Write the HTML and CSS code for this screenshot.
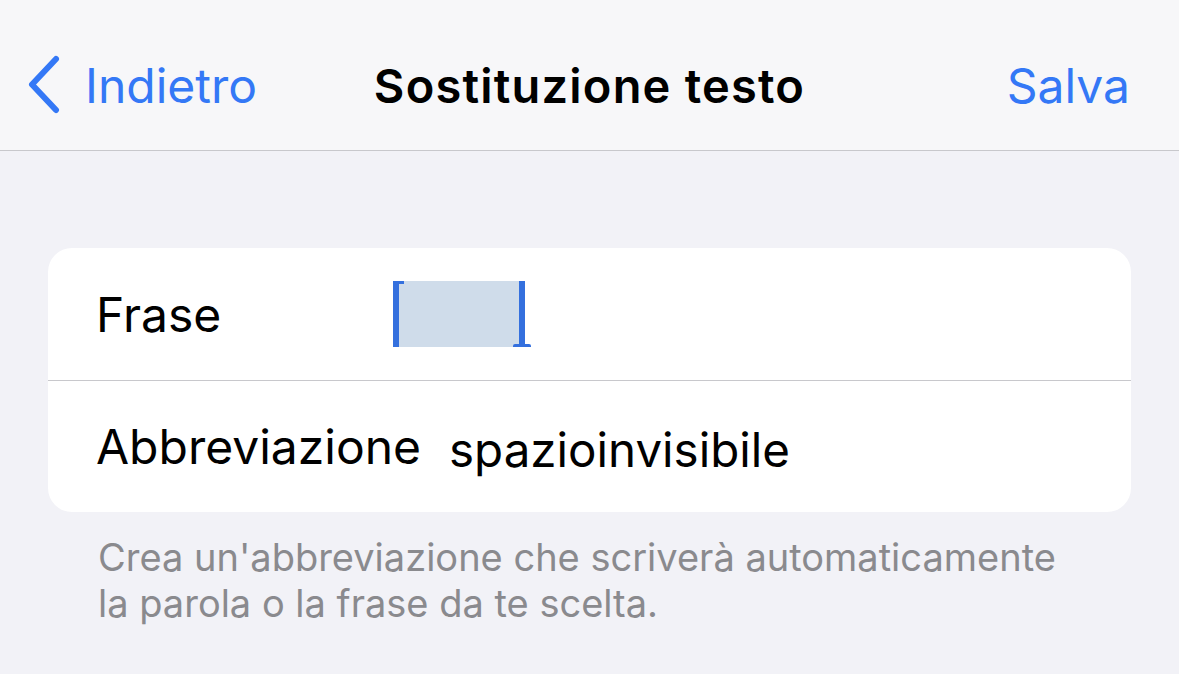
FILE: index.html
```html
<!DOCTYPE html>
<html lang="it">

<head>
  <meta charset="UTF-8" />
  <meta name="viewport" content="width=device-width, initial-scale=1" />
  <title>Sostituzione testo</title>
  <link rel="stylesheet" href="styles.css">
</head>

<body>
  <header class="nav-bar">
    <div class="nav-back">
      <svg class="chevron" width="36" height="60" viewBox="0 0 36 60" aria-hidden="true">
        <path d="M29 4 L5 29.5 L29 55" fill="none" stroke="#3478f6" stroke-width="6" stroke-linecap="round" stroke-linejoin="round" />
      </svg>
      <span>Indietro</span>
    </div>
    <h1 class="nav-title">Sostituzione testo</h1>
    <div class="nav-action">Salva</div>
  </header>

  <main class="content">
    <div class="card">
      <div class="row">
        <span class="row-label">Frase</span>
        <span class="selection"><span class="sel-fill"></span></span>
      </div>
      <div class="row">
        <span class="row-label">Abbreviazione</span>
        <span class="row-value">spazioinvisibile</span>
      </div>
    </div>
    <p class="footnote">Crea un'abbreviazione che scriverà automaticamente<br>la parola o la frase da te scelta.</p>
  </main>
</body>

</html>
```

FILE: styles.css
```css
body {
  font-family: Inter, 'Noto Sans', sans-serif;
  background-color: #f2f2f7;
  color: #000;
  margin: 0;
  padding: 0;
  height: 674px;
  overflow: hidden;
}

.nav-bar {
  height: 151px;
  box-sizing: border-box;
  background-color: #f7f7f9;
  border-bottom: 1px solid #c8c8cc;
  display: flex;
  align-items: center;
  justify-content: space-between;
  padding: 20px 49px 0 27px;
  position: relative;
}

.nav-back {
  display: flex;
  align-items: center;
  gap: 22px;
  color: #3478f6;
  font-size: 48px;
}

.chevron {
  display: block;
}

.nav-title {
  position: absolute;
  left: 0;
  right: 0;
  top: 20px;
  bottom: 0;
  display: flex;
  align-items: center;
  justify-content: center;
  margin: 0;
  font-size: 47px;
  font-weight: 600;
  letter-spacing: 1.2px;
  pointer-events: none;
}

.nav-action {
  color: #3478f6;
  font-size: 48px;
}

.content {
  padding: 97px 48px 0 48px;
}

.card {
  background: #fff;
  border-radius: 24px;
}

.row {
  height: 132px;
  display: flex;
  align-items: center;
  padding-left: 48px;
  position: relative;
}

.row + .row {
  height: 131px;
  border-top: 1px solid #c8c8cc;
}

.row-label {
  font-size: 48px;
  width: 297px;
  flex: none;
}

.row + .row .row-label {
  width: auto;
  margin-right: 28px;
}

.row-value {
  font-size: 47.5px;
  margin-top: 5px;
}

.selection {
  display: flex;
  height: 66px;
  margin-top: 0;
  border-left: 6px solid #3470de;
  border-right: 6px solid #3470de;
  position: relative;
}

.sel-fill {
  width: 120px;
  background: #cfdcea;
}

.selection::before {
  content: '';
  position: absolute;
  top: 0;
  left: 0;
  width: 5px;
  height: 3px;
  background: #3470de;
}

.selection::after {
  content: '';
  position: absolute;
  bottom: 0;
  right: -12px;
  width: 18px;
  height: 3px;
  border-radius: 2px 2px 0 0;
  background: #3470de;
}

.footnote {
  margin: 22px 0 0 50px;
  font-size: 38px;
  line-height: 46px;
  color: #8a8a8e;
}
```
